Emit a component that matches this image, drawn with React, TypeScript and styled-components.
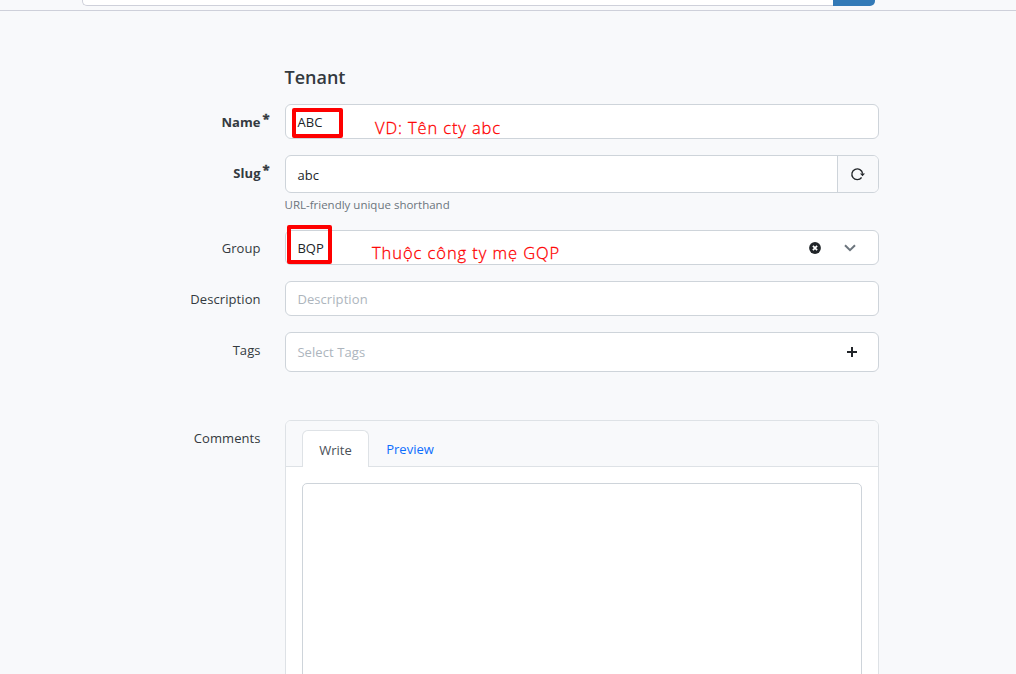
import React from "react";
import styled, { createGlobalStyle } from "styled-components";

const GlobalStyle = createGlobalStyle`
  * { box-sizing: border-box; }
  html, body { margin: 0; height: 100%; overflow: hidden; background: #f8f9fb; }
  body {
    font-family: "Open Sans", "Noto Sans", sans-serif;
    font-size: 13px;
    line-height: 20px;
    color: #212529;
  }
`;

const Page = styled.div`
  height: 674px;
  overflow: hidden;
`;

const TopBar = styled.header`
  height: 11px;
  padding-left: 82px;
  display: flex;
  align-items: flex-start;
  border-bottom: 1px solid #ced0da;
`;

const SearchBox = styled.div`
  width: 751px;
  height: 6px;
  background: #fff;
  border: 1px solid #ced0da;
  border-width: 0 0 1px 1px;
  border-bottom-left-radius: 5px;
`;

const SearchButton = styled.div`
  width: 42px;
  height: 6px;
  background: #337ab7;
  border-bottom-right-radius: 5px;
`;

const Form = styled.main`
  width: 879px;
  padding-top: 54px;
`;

const Title = styled.h5`
  margin: 0 0 15px 284.5px;
  font-size: 18px;
  line-height: 24px;
  font-weight: 600;
  color: #343a40;
`;

const Row = styled.div<{ $gap?: number }>`
  display: grid;
  grid-template-columns: 260px 594px;
  column-gap: 25px;
  margin-bottom: ${(p) => p.$gap ?? 16}px;
`;

const Label = styled.label<{ $bold?: boolean }>`
  position: relative;
  justify-self: end;
  margin-right: -0.6px;
  padding-top: 8px;
  color: #343a40;
  font-weight: ${(p) => (p.$bold ? 700 : 400)};
  letter-spacing: 0.08px;
`;

const Required = styled.span`
  position: absolute;
  left: calc(100% + 2px);
  top: 5px;
  font-size: 13px;
  -webkit-text-stroke: 0.4px #343a40;
`;

const Control = styled.div<{ $height?: number }>`
  position: relative;
  display: flex;
  align-items: center;
  height: ${(p) => p.$height ?? 35}px;
  padding-left: 11.4px;
  background: #fff;
  border: 1px solid #ced4da;
  border-radius: 6px;
`;

const Value = styled.span<{ $muted?: boolean; $drop?: number }>`
  flex: 1;
  padding-top: ${(p) => p.$drop ?? 0}px;
  color: ${(p) => (p.$muted ? "#adb5bd" : "#212529")};
  letter-spacing: 0.08px;
`;

const Addon = styled.button`
  width: 41px;
  height: 36px;
  padding: 0 1px 0 0;
  display: grid;
  place-items: center;
  background: #f8f9fb;
  border: 0;
  border-left: 1px solid #ced4da;
  border-radius: 0 5px 5px 0;
`;

const Actions = styled.div<{ $right: number }>`
  display: flex;
  align-items: center;
  gap: 23.5px;
  margin-right: ${(p) => p.$right}px;

  svg { display: block; }
`;

const Help = styled.small`
  display: block;
  margin: 3px 0 0 -0.5px;
  font-size: 11.5px;
  line-height: 18px;
  color: #6c757d;
`;

const Highlight = styled.div<{ $x: number; $y: number; $w: number; $h: number }>`
  position: absolute;
  left: ${(p) => p.$x}px;
  top: ${(p) => p.$y}px;
  width: ${(p) => p.$w}px;
  height: ${(p) => p.$h}px;
  border: 4px solid #fe0000;
  border-radius: 2px;
`;

const Note = styled.div<{ $x: number; $y: number; $spacing: number }>`
  position: absolute;
  left: ${(p) => p.$x}px;
  top: ${(p) => p.$y}px;
  font-family: "Open Sans", "Noto Sans", sans-serif;
  font-weight: 300;
  font-size: 16.5px;
  line-height: 24px;
  letter-spacing: ${(p) => p.$spacing}px;
  white-space: nowrap;
  color: #fe0000;
  -webkit-text-stroke: 0.3px #fe0000;
`;

const Card = styled.section`
  height: 300px;
  background: #fff;
  border: 1px solid #dee2e6;
  border-radius: 6px;
`;

const TabBar = styled.div`
  display: flex;
  align-items: flex-end;
  height: 46px;
  padding-left: 16px;
  background: #f8f9fb;
  border-bottom: 1px solid #dee2e6;
  border-radius: 5px 5px 0 0;
`;

const Tab = styled.div<{ $active?: boolean }>`
  width: ${(p) => (p.$active ? 67 : 82)}px;
  height: 37px;
  margin-bottom: -1px;
  padding-top: ${(p) => (p.$active ? 9 : 8)}px;
  text-align: center;
  color: ${(p) => (p.$active ? "#495057" : "#0d6efd")};
  background: ${(p) => (p.$active ? "#fff" : "transparent")};
  border: 1px solid ${(p) => (p.$active ? "#dee2e6" : "transparent")};
  border-bottom: 0;
  border-radius: 6px 6px 0 0;
`;

const Editor = styled.div`
  height: 260px;
  margin: 16px 16px 0;
  border: 1px solid #ced4da;
  border-radius: 5px;
`;

const ReloadIcon = () => (
  <svg width="16" height="16" viewBox="0 0 16 16" fill="none">
    <path d="M11.6 11.5A5.4 5.4 0 1 1 12.6 7.6" stroke="#212529" strokeWidth="1.3" />
    <path d="M10 7.4h5l-2.5 2.8z" fill="#212529" />
  </svg>
);

const ClearIcon = () => (
  <svg width="12" height="12" viewBox="0 0 12 12">
    <circle cx="6" cy="6" r="5.9" fill="#212529" />
    <path d="M3.9 3.9l4.2 4.2M8.1 3.9L3.9 8.1" stroke="#fff" strokeWidth="1.7" />
  </svg>
);

const ChevronIcon = () => (
  <svg width="12" height="8" viewBox="0 0 12 8" fill="none">
    <path d="M1 1.2l5 5 5-5" stroke="#6c757d" strokeWidth="2" />
  </svg>
);

const PlusIcon = () => (
  <svg width="10" height="10" viewBox="0 0 10 10">
    <path d="M4 0h2v4h4v2H6v4H4V6H0V4h4z" fill="#212529" />
  </svg>
);

export default function App() {
  return (
    <Page>
      <GlobalStyle />
      <TopBar>
        <SearchBox />
        <SearchButton />
      </TopBar>
      <Form>
        <Title>Tenant</Title>
        <Row>
          <Label $bold>Name<Required>*</Required></Label>
          <Control>
            <Value>ABC</Value>
            <Highlight $x={6} $y={3} $w={51} $h={30} />
            <Note $x={89} $y={11} $spacing={0.88}>VD: Tên cty abc</Note>
          </Control>
        </Row>
        <Row>
          <Label $bold>Slug<Required>*</Required></Label>
          <div>
            <Control $height={38}>
              <Value $drop={2}>abc</Value>
              <Addon aria-label="Regenerate slug"><ReloadIcon /></Addon>
            </Control>
            <Help>URL-friendly unique shorthand</Help>
          </div>
        </Row>
        <Row>
          <Label>Group</Label>
          <Control>
            <Value>BQP</Value>
            <Actions $right={22}><ClearIcon /><ChevronIcon /></Actions>
            <Highlight $x={1} $y={-6} $w={45} $h={39} />
            <Note $x={86} $y={10} $spacing={0.93}>Thuộc công ty mẹ GQP</Note>
          </Control>
        </Row>
        <Row>
          <Label>Description</Label>
          <Control><Value $muted>Description</Value></Control>
        </Row>
        <Row $gap={48}>
          <Label>Tags</Label>
          <Control $height={40}>
            <Value $muted>Select Tags</Value>
            <Actions $right={21}><PlusIcon /></Actions>
          </Control>
        </Row>
        <Row>
          <Label>Comments</Label>
          <Card>
            <TabBar>
              <Tab $active>Write</Tab>
              <Tab>Preview</Tab>
            </TabBar>
            <Editor />
          </Card>
        </Row>
      </Form>
    </Page>
  );
}
